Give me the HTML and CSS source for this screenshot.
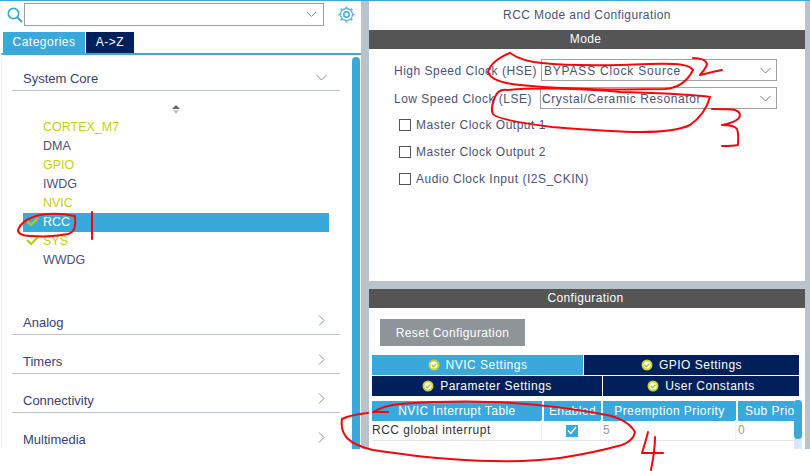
FILE: index.html
```html
<!DOCTYPE html>
<html lang="en">
<head>
  <meta charset="UTF-8" />
  <title>RCC Mode and Configuration</title>
  <link rel="stylesheet" href="styles.css">
</head>
<body>
  <div class="app">

    <!-- Left: categories -->
    <div class="side">
      <div class="search-row">
        <svg class="search-icon" width="16" height="16" viewBox="0 0 16 16"><circle cx="6.5" cy="6.5" r="5.2" fill="none" stroke="#39a9dc" stroke-width="1.7"/><path d="M10.3 10.3L15 15" stroke="#39a9dc" stroke-width="2.2"/></svg>
        <div class="search-box">
          <svg class="chev" width="11" height="7" viewBox="0 0 11 7"><path d="M1 1l4.5 4.5L10 1" fill="none" stroke="#8b9195" stroke-width="1"/></svg>
        </div>
        <svg class="gear" width="17" height="17" viewBox="0 0 17 17"><circle cx="8.5" cy="8.5" r="6" fill="none" stroke="#5fb8e4" stroke-width="1.3"/><circle cx="8.5" cy="8.5" r="2.7" fill="none" stroke="#39a9dc" stroke-width="1.4"/><path d="M8.5 0.5v2.2M8.5 14.3v2.2M0.5 8.5h2.2M14.3 8.5h2.2M2.8 2.8l1.6 1.6M12.6 12.6l1.6 1.6M2.8 14.2l1.6-1.6M12.6 4.4l1.6-1.6" stroke="#5fb8e4" stroke-width="2"/></svg>
      </div>
      <div class="side-tabs">
        <div class="side-tab on">Categories</div>
        <div class="side-tab">A-&gt;Z</div>
      </div>
      <div class="side-body">
        <div class="tree">
          <div class="cat open">
            <span>System Core</span>
            <svg width="11" height="7" viewBox="0 0 11 7"><path d="M0.5 1l5 5 5-5" fill="none" stroke="#8b9195" stroke-width="1"/></svg>
          </div>
          <div class="sorter"><span class="up"></span><span class="down"></span></div>
          <ul class="items">
            <li class="ok">CORTEX_M7</li>
            <li>DMA</li>
            <li class="ok">GPIO</li>
            <li>IWDG</li>
            <li class="ok">NVIC</li>
            <li class="sel"><svg class="tick" width="13" height="10" viewBox="0 0 13 10"><path d="M1 4l4 4 7-7" fill="none" stroke="#b5c918" stroke-width="2.2"/></svg>RCC</li>
            <li class="ok"><svg class="tick" width="13" height="10" viewBox="0 0 13 10"><path d="M1 4l4 4 7-7" fill="none" stroke="#b5c918" stroke-width="2.2"/></svg>SYS</li>
            <li>WWDG</li>
          </ul>
          <div class="cat first-closed"><span>Analog</span><svg width="7" height="11" viewBox="0 0 7 11"><path d="M1 0.5l5 5-5 5" fill="none" stroke="#8b9195" stroke-width="1"/></svg></div>
          <div class="cat"><span>Timers</span><svg width="7" height="11" viewBox="0 0 7 11"><path d="M1 0.5l5 5-5 5" fill="none" stroke="#8b9195" stroke-width="1"/></svg></div>
          <div class="cat"><span>Connectivity</span><svg width="7" height="11" viewBox="0 0 7 11"><path d="M1 0.5l5 5-5 5" fill="none" stroke="#8b9195" stroke-width="1"/></svg></div>
          <div class="cat"><span>Multimedia</span><svg width="7" height="11" viewBox="0 0 7 11"><path d="M1 0.5l5 5-5 5" fill="none" stroke="#8b9195" stroke-width="1"/></svg></div>
        </div>
        <div class="side-scroll"></div>
      </div>
    </div>

    <!-- Right: mode and configuration -->
    <div class="main">
      <div class="mode-panel">
        <div class="title">RCC Mode and Configuration</div>
        <div class="bar">Mode</div>
        <div class="mode-body">
          <div class="field">
            <label>High Speed Clock (HSE)</label>
            <div class="select hse">BYPASS Clock Source
              <svg width="11" height="7" viewBox="0 0 11 7"><path d="M0.5 1l5 5 5-5" fill="none" stroke="#777" stroke-width="1"/></svg>
            </div>
          </div>
          <div class="field">
            <label>Low Speed Clock (LSE)</label>
            <div class="select lse">Crystal/Ceramic Resonator
              <svg width="11" height="7" viewBox="0 0 11 7"><path d="M0.5 1l5 5 5-5" fill="none" stroke="#777" stroke-width="1"/></svg>
            </div>
          </div>
          <div class="checks">
            <div class="check"><span class="box"></span>Master Clock Output 1</div>
            <div class="check"><span class="box"></span>Master Clock Output 2</div>
            <div class="check"><span class="box"></span>Audio Clock Input (I2S_CKIN)</div>
          </div>
        </div>
      </div>

      <div class="config-panel">
        <div class="bar">Configuration</div>
        <div class="config-body">
          <div class="reset">Reset Configuration</div>
          <div class="tabs">
            <div class="tab-row row-a">
              <div class="tab on"><svg class="dot" width="12" height="12" viewBox="0 0 12 12"><circle cx="6" cy="6" r="5.5" fill="#c9d42c"/><circle cx="6" cy="6" r="3.6" fill="#fff"/><path d="M3.6 5.8l1.8 1.9 3-3.2" fill="none" stroke="#b5c918" stroke-width="1.3"/></svg>NVIC Settings</div>
              <div class="tab"><svg class="dot" width="12" height="12" viewBox="0 0 12 12"><circle cx="6" cy="6" r="5.5" fill="#c9d42c"/><circle cx="6" cy="6" r="3.6" fill="#fff"/><path d="M3.6 5.8l1.8 1.9 3-3.2" fill="none" stroke="#b5c918" stroke-width="1.3"/></svg>GPIO Settings</div>
            </div>
            <div class="tab-row row-b">
              <div class="tab"><svg class="dot" width="12" height="12" viewBox="0 0 12 12"><circle cx="6" cy="6" r="5.5" fill="#c9d42c"/><circle cx="6" cy="6" r="3.6" fill="#fff"/><path d="M3.6 5.8l1.8 1.9 3-3.2" fill="none" stroke="#b5c918" stroke-width="1.3"/></svg>Parameter Settings</div>
              <div class="tab"><svg class="dot" width="12" height="12" viewBox="0 0 12 12"><circle cx="6" cy="6" r="5.5" fill="#c9d42c"/><circle cx="6" cy="6" r="3.6" fill="#fff"/><path d="M3.6 5.8l1.8 1.9 3-3.2" fill="none" stroke="#b5c918" stroke-width="1.3"/></svg>User Constants</div>
            </div>
          </div>
          <div class="table-wrap">
            <div class="grid head">
              <div>NVIC Interrupt Table</div>
              <div>Enabled</div>
              <div>Preemption Priority</div>
              <div class="cut">Sub Prio</div>
            </div>
            <div class="grid data">
              <div class="name">RCC global interrupt</div>
              <div class="center"><span class="cb"><svg width="10" height="9" viewBox="0 0 10 9"><path d="M1 4.5l2.8 3L9 1" fill="none" stroke="#fff" stroke-width="1.4"/></svg></span></div>
              <div class="num">5</div>
              <div class="num">0</div>
            </div>
            <div class="table-track"><div class="table-thumb"></div></div>
          </div>
        </div>
      </div>
    </div>
    <div class="edge"></div>
  </div>

  <!-- Hand drawn marks on top of the screenshot -->
  <svg class="marks" width="810" height="471" viewBox="0 0 810 471" fill="none" stroke="#f4060c" stroke-width="2" stroke-linecap="round" stroke-linejoin="round">
    <path d="M74 216C62 213 46 213 36 216C26 219 20 224 18 230C18 234 24 236 32 236C44 237 58 236 68 234C75 232 76 226 75 216"/>
    <path d="M92 212V239"/>
    <path d="M510 53C498 58 490 65 488 72C490 79 500 83 520 85C560 89 620 90 665 89C680 88 688 80 693 70C690 65 680 63 650 64C600 66 560 65 542 63C530 62 520 60 510 53Z"/>
    <path d="M693 58C700 58 706 60 707 64C706 69 702 72 700 75C708 73 716 71 722 70"/>
    <path d="M507 90C500 89 497 92 495 97C492 104 491 110 493 114C497 119 520 123 552 127C590 130 620 132 640 132C665 132 682 129 690 125C700 118 707 108 710 97C690 94 650 93 620 92C590 89 540 87 507 90"/>
    <path d="M712 109C720 109 730 109 735 110C741 112 741 116 738 119C734 122 728 124 722 125C728 125 735 126 737 129C739 134 738 140 738 145C733 146 728 146 722 146"/>
    <path d="M388 412C382 412 376 412 373 412C380 408 390 405 400 404C430 402 460 401 490 402C530 403 570 408 607 415C620 418 630 423 635 432C634 438 630 442 622 445C600 451 580 455 560 458C530 462 490 462 450 459C420 457 395 453 373 450C360 447 352 443 347 438C342 432 341 425 342 419C350 415 358 414 368 413"/>
    <path d="M648 432C646 440 644 447 642 453C648 453 656 453 663 453"/>
    <path d="M655 437C655 448 653 460 651 470"/>
  </svg>
</body>
</html>
```

FILE: styles.css
```css
* {
  box-sizing: border-box;
}

html, body {
  margin: 0;
  padding: 0;
  background: white;
  overflow: hidden;
}

body {
  width: 810px;
  height: 471px;
  position: relative;
  font-family: 'Liberation Sans', Arial, sans-serif;
  font-size: 12px;
  letter-spacing: 0.5px;
  color: #4c5272;
}

.app {
  display: flex;
  height: 449px;
  overflow: hidden;
  border-top: 1px solid #39a9dc;
}

.side {
  width: 361px;
  flex: none;
  display: flex;
  flex-direction: column;
}

.search-row {
  height: 31px;
  flex: none;
  display: flex;
  align-items: flex-start;
  padding: 2px 0 0 7px;
}

.search-icon {
  margin-top: 4px;
}

.search-box {
  width: 300px;
  height: 23px;
  margin-left: 1px;
  border: 1px solid #9a9fa3;
  display: flex;
  align-items: center;
  justify-content: flex-end;
  padding-right: 6px;
}

.gear {
  margin: 3px 0 0 14px;
}

.side-tabs {
  display: flex;
  flex: none;
  gap: 1px;
  height: 21px;
  padding-left: 3px;
}

.side-tab {
  width: 48px;
  background: #00205b;
  color: white;
  line-height: 21px;
  text-align: center;
}

.side-tab.on {
  width: 82px;
  background: #39a9dc;
}

.side-body {
  flex: 1;
  min-height: 0;
  display: flex;
  margin-left: 1px;
  border-top: 2px solid #39a9dc;
  border-left: 1px solid #f0f0f0;
}

.tree {
  width: 328px;
  margin: 0 0 0 10px;
  flex: none;
  overflow: hidden;
}

.cat {
  height: 39px;
  border-bottom: 1px solid #b9c4ca;
  display: flex;
  justify-content: space-between;
  align-items: flex-end;
  padding: 0 15px 3px 11px;
  font-size: 13px;
  line-height: 17px;
  letter-spacing: 0;
  color: #3a4170;
}

.cat svg {
  margin-bottom: 5px;
}

.cat.open {
  height: 36px;
  padding-right: 13px;
}

.cat.open svg {
  margin-bottom: 6px;
}

.cat.first-closed {
  height: 40px;
}

.sorter {
  display: flex;
  flex-direction: column;
  align-items: center;
  gap: 1px;
  height: 27px;
  padding-top: 14px;
}

.sorter .up {
  border: 4px solid transparent;
  border-top: 0;
  border-bottom: 4px solid #666;
}

.sorter .down {
  border: 4px solid transparent;
  border-bottom: 0;
  border-top: 4px solid #c6c9cb;
}

.items {
  list-style: none;
  margin: 0 0 0 11px;
  padding: 0 0 25px 0;
  width: 306px;
}

.items li {
  height: 19px;
  line-height: 19px;
  padding-left: 20px;
  position: relative;
  font-size: 12.5px;
  letter-spacing: 0;
}

.items li.ok {
  color: #c5cf12;
}

.items li.sel {
  background: #39a9dc;
  color: white;
}

.tick {
  position: absolute;
  left: 3px;
  top: 4px;
}

.side-scroll {
  width: 8px;
  margin: 2px 0 0 12px;
  background: #39a9dc;
  border-radius: 4px 4px 0 0;
  flex: none;
}

.main {
  width: 436px;
  flex: none;
  margin-left: 8px;
  display: flex;
  flex-direction: column;
  gap: 8px;
}

.mode-panel {
  height: 280px;
  flex: none;
  background: white;
}

.config-panel {
  flex: 1;
  min-height: 0;
  overflow: hidden;
}

.title {
  height: 29px;
  line-height: 29px;
  text-align: center;
  letter-spacing: 0.4px;
}

.bar {
  height: 19px;
  line-height: 19px;
  padding-right: 3px;
  background: #545554;
  color: white;
  text-align: center;
  letter-spacing: 0.35px;
}

.mode-body {
  padding: 10px 0 0 25px;
}

.field {
  display: flex;
  align-items: center;
  height: 22px;
  margin-bottom: 6px;
}

.field label {
  width: 147px;
  flex: none;
  padding-top: 1px;
}

.select {
  width: 236px;
  height: 22px;
  border: 1px solid #a0a0a0;
  padding: 1px 5px 0 2px;
  display: flex;
  justify-content: space-between;
  align-items: center;
}

.select.hse {
  letter-spacing: 0.8px;
}

.select.lse {
  width: 237px;
  margin-left: -1px;
  padding-left: 1px;
  letter-spacing: 0.6px;
}

.checks {
  margin-top: -4px;
}

.check {
  display: flex;
  align-items: center;
  height: 27px;
  padding-left: 5px;
}

.box {
  width: 12px;
  height: 12px;
  border: 1px solid #555;
  margin-right: 5px;
  flex: none;
}

.config-body {
  padding: 11px 3px 0 3px;
}

.reset {
  width: 145px;
  height: 27px;
  line-height: 28px;
  margin-left: 8px;
  background: #8e9498;
  color: white;
  text-align: center;
  letter-spacing: 0.4px;
}

.tabs {
  margin-top: 9px;
  width: 427px;
  display: flex;
  flex-direction: column;
  gap: 1px;
}

.tab-row {
  display: grid;
  height: 20px;
  gap: 1px;
}

.row-a {
  grid-template-columns: 211px 215px;
}

.row-b {
  grid-template-columns: 230px 196px;
}

.tab {
  background: #00205b;
  color: white;
  display: flex;
  align-items: center;
  justify-content: center;
  line-height: 20px;
}

.tab.on {
  background: #39a9dc;
}

.dot {
  margin-right: 6px;
  flex: none;
}

.table-wrap {
  position: relative;
  margin-top: 5px;
  width: 430px;
  height: 49px;
}

.grid {
  display: grid;
  grid-template-columns: 170px 57px 133px 58px;
  gap: 2px;
  width: 424px;
}

.head {
  height: 19px;
  line-height: 20px;
  text-align: center;
  color: white;
  letter-spacing: 0.45px;
}

.head div {
  background: #39a9dc;
  white-space: nowrap;
}

.head .cut {
  text-align: left;
  padding-left: 7px;
}

.data {
  height: 21px;
  line-height: 21px;
  border-bottom: 1px solid #e2e6e8;
}

.data div {
  border-right: 1px solid #eef0f1;
}

.name {
  color: #333;
}

.center {
  display: flex;
  align-items: center;
  justify-content: center;
}

.cb {
  width: 12px;
  height: 12px;
  background: #39a9dc;
  display: flex;
  align-items: center;
  justify-content: center;
}

.num {
  color: #9a9a9a;
}

/* table scrollbar sits on top of the last column */
.table-track {
  position: absolute;
  left: 422px;
  top: -1px;
  width: 8px;
  height: 50px;
  background: #dbe8f5;
}

.table-thumb {
  height: 39px;
  background: #39a9dc;
  border-radius: 4px;
}

.edge {
  flex: 1;
}

.app, .main, .edge {
  background: #b9c4ca;
}

.side {
  background: white;
}

.config-panel {
  background: white;
}

.marks {
  position: absolute;
  left: 0;
  top: 0;
  pointer-events: none;
}
```
